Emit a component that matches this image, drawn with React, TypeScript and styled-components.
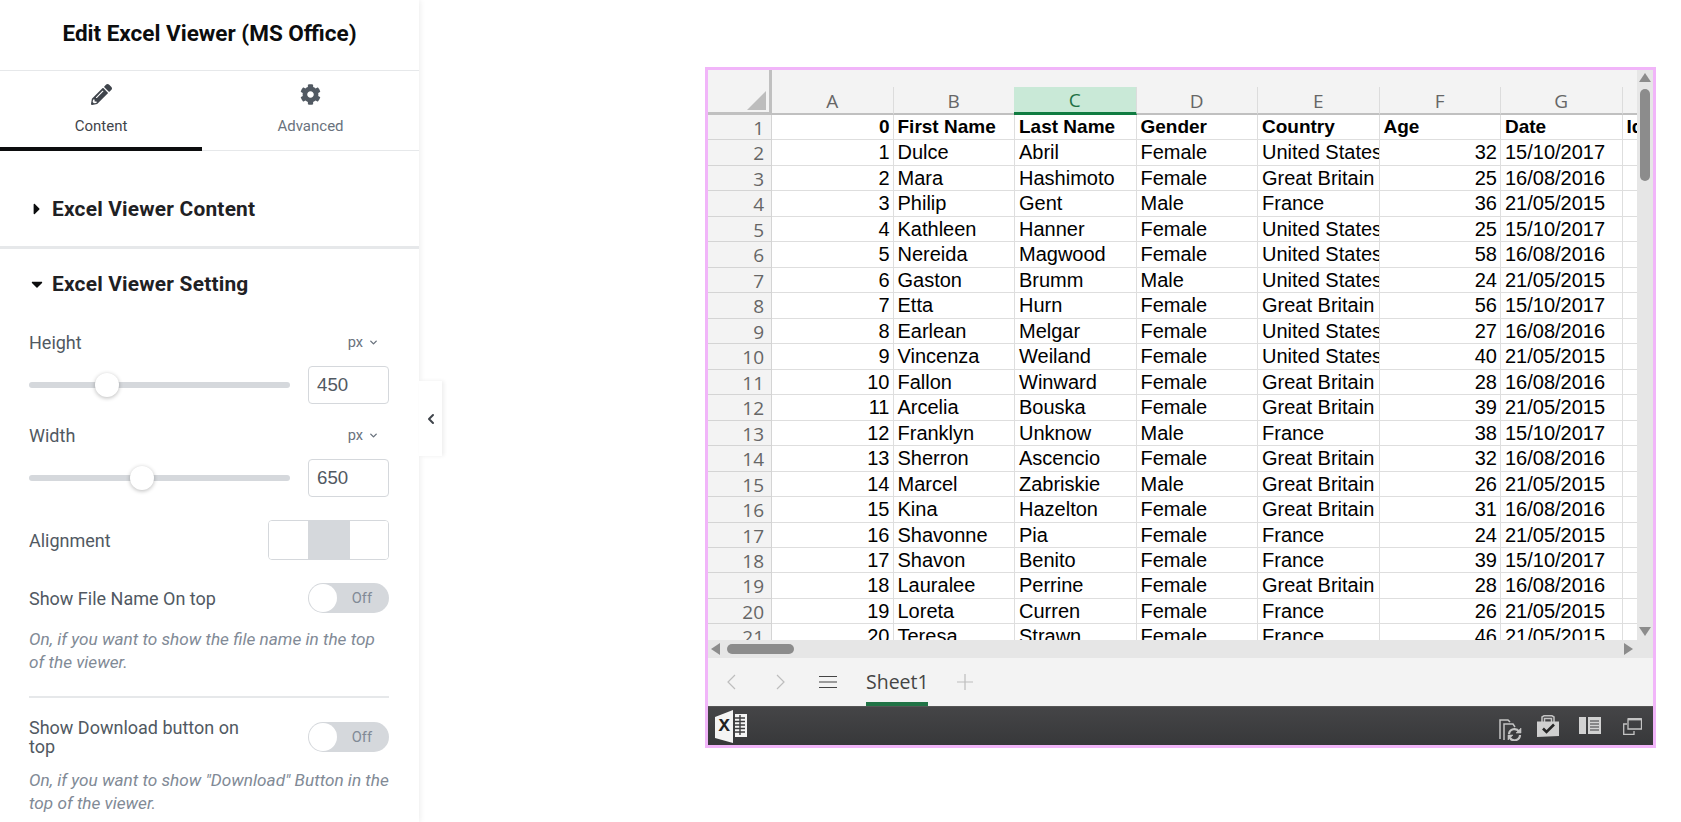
import styled, { createGlobalStyle } from "styled-components";
import { FaCog, FaPencilAlt, FaCaretRight, FaCaretDown } from "react-icons/fa";
import { LuChevronDown, LuChevronLeft } from "react-icons/lu";

const GlobalStyle = createGlobalStyle`
  html, body {
    margin: 0;
    padding: 0;
    background: #fff;
    overflow: hidden;
  }
  * {
    box-sizing: border-box;
  }
`;

const Page = styled.div`
  display: flex;
  width: 1681px;
  height: 822px;
  font-family: Roboto, "Liberation Sans", sans-serif;
`;

/* ---------- editor panel ---------- */
const Panel = styled.aside`
  position: relative;
  flex: none;
  width: 419px;
  height: 822px;
  background: #fff;
  box-shadow: 1px 0 6px rgba(0, 0, 0, 0.08);
`;
const PanelClip = styled.div`
  height: 822px;
  overflow: hidden;
`;
const PanelTitle = styled.h1`
  margin: 0;
  height: 71px;
  display: flex;
  align-items: center;
  justify-content: center;
  padding-bottom: 4px;
  font-size: 22.5px;
  font-weight: 700;
  color: #0c0d0e;
  border-bottom: 1px solid #e6e8ea;
`;
const Tabs = styled.div`
  display: flex;
  height: 80px;
  border-bottom: 1px solid #e6e8ea;
`;
const Tab = styled.div<{ $active?: boolean }>`
  flex: ${(p) => (p.$active ? "0 0 202px" : "1")};
  display: flex;
  flex-direction: column;
  align-items: center;
  padding-top: 13px;
  font-size: 15px;
  color: ${(p) => (p.$active ? "#3f444b" : "#69727d")};
  border-bottom: 4px solid ${(p) => (p.$active ? "#0c0d0e" : "transparent")};
  margin-bottom: -1px;
  svg {
    width: 21px;
    height: 21px;
    margin-bottom: 12px;
    color: ${(p) => (p.$active ? "#3f444b" : "#515962")};
  }
`;
const Section = styled.div<{ $open?: boolean }>`
  display: flex;
  align-items: center;
  gap: 6px;
  height: ${(p) => (p.$open ? "81px" : "95px")};
  padding: ${(p) => (p.$open ? "0 0 11px 28px" : "21px 0 0 28px")};
  font-size: 20.9px;
  font-weight: 700;
  letter-spacing: 0.2px;
  color: #1f2124;
  svg {
    width: 18px;
    height: 18px;
    color: #0c0d0e;
  }
`;
const SectionRule = styled.div`
  height: 3px;
  background: #e6e8ea;
`;
const Controls = styled.div`
  padding: 0 30px 0 29px;
`;
const LabelRow = styled.div`
  display: flex;
  align-items: center;
  justify-content: space-between;
  height: 24px;
  font-size: 18px;
  color: #515962;
`;
const Unit = styled.span`
  display: flex;
  align-items: center;
  gap: 5px;
  margin-right: 10px;
  font-size: 14.6px;
  color: #69727d;
  svg {
    width: 11px;
    height: 11px;
    stroke-width: 3;
  }
`;
const SliderRow = styled.div`
  display: flex;
  align-items: center;
  justify-content: space-between;
  height: 38px;
  margin: 12px 0 19px;
`;
const Track = styled.div`
  position: relative;
  width: 261px;
  height: 6px;
  border-radius: 3px;
  background: #d5d8dc;
`;
const Thumb = styled.div`
  position: absolute;
  top: -9px;
  width: 24px;
  height: 24px;
  border-radius: 50%;
  background: #fff;
  box-shadow: 0 1px 4px rgba(0, 0, 0, 0.28);
`;
const NumberBox = styled.div`
  display: flex;
  align-items: center;
  width: 81px;
  height: 38px;
  padding-left: 8px;
  font-family: "Liberation Sans", Arial, sans-serif;
  font-size: 18.67px;
  color: #515962;
  border: 1px solid #d5d8dc;
  border-radius: 4px;
`;
const InlineRow = styled.div<{ $h: number; $top?: number }>`
  display: flex;
  align-items: center;
  justify-content: space-between;
  height: ${(p) => p.$h}px;
  margin-top: ${(p) => p.$top ?? 0}px;
  font-size: 18px;
  color: #515962;
`;
const AlignBox = styled.div`
  display: flex;
  width: 121px;
  height: 40px;
  overflow: hidden;
  border: 1px solid #d5d8dc;
  border-radius: 4px;
`;
const AlignCell = styled.div<{ $on?: boolean }>`
  flex: ${(p) => (p.$on ? "0 0 42px" : "1")};
  background: ${(p) => (p.$on ? "#d5d8dc" : "#fff")};
`;
const Toggle = styled.div`
  flex: none;
  display: flex;
  align-items: center;
  justify-content: space-between;
  width: 81px;
  height: 30px;
  padding: 0 17px 0 1px;
  font-size: 14.6px;
  color: #818a96;
  background: #d5d8dc;
  border-radius: 15px;
`;
const Knob = styled.div`
  width: 28px;
  height: 28px;
  border-radius: 50%;
  background: #fff;
`;
const ToggleLabel = styled.div`
  width: 225px;
  line-height: 19px;
`;
const Hint = styled.p<{ $top: number }>`
  margin: ${(p) => p.$top}px 0 0;
  font-size: 17.2px;
  line-height: 23px;
  font-style: italic;
  color: #818a96;
`;
const Rule = styled.div`
  height: 2px;
  margin: 22px 0 24px;
  background: #e6e8ea;
`;
const Collapse = styled.div`
  position: absolute;
  top: 381px;
  left: 419px;
  width: 23px;
  height: 75px;
  display: flex;
  align-items: center;
  justify-content: center;
  background: #fff;
  box-shadow: 2px 0 4px rgba(0, 0, 0, 0.07);
  svg {
    width: 16px;
    height: 16px;
    color: #3f444b;
  }
`;

/* ---------- excel viewer ---------- */
const Main = styled.main`
  flex: 1;
  padding: 67px 0 0 286px;
`;
const Viewer = styled.div`
  display: flex;
  flex-direction: column;
  width: 951px;
  height: 681px;
  border: 3px solid #f1b5f9;
`;
const SheetArea = styled.div`
  display: flex;
  height: 570px;
  overflow: hidden;
`;
const Grid = styled.div`
  flex: 1;
  min-width: 0;
  overflow: hidden;
  font-family: "Liberation Sans", Arial, sans-serif;
  font-size: 20px;
  color: #000;
`;
const ColHeaders = styled.div`
  display: flex;
  height: 45px;
  background: #f3f3f3;
`;
const Corner = styled.div`
  position: relative;
  flex: none;
  width: 64px;
  border-right: 3px solid #c0c0c0;
  border-bottom: 3px solid #c0c0c0;
`;
const CornerMark = styled.div`
  position: absolute;
  right: 3px;
  bottom: 2px;
  width: 19px;
  height: 19px;
  background: #bdbdbd;
  clip-path: polygon(100% 0, 100% 100%, 0 100%);
`;
const ColHead = styled.div<{ $on?: boolean }>`
  flex: none;
  width: ${(p) => (p.$on ? "122.5px" : "121.5px")};
  height: 28px;
  margin: 17px 0 0 ${(p) => (p.$on ? "-1px" : "0")};
  padding-top: 1px;
  display: flex;
  align-items: center;
  justify-content: center;
  font-family: "Open Sans", "Noto Sans", sans-serif;
  font-size: 19px;
  color: ${(p) => (p.$on ? "#1e7145" : "#666")};
  background: ${(p) => (p.$on ? "#c9e9d7" : "transparent")};
  border-right: 1px solid #dcdcdc;
  border-bottom: ${(p) => (p.$on ? "3px solid #107c41" : "2px solid #c0c0c0")};
`;
const Row = styled.div`
  display: flex;
  height: 25.47px;
`;
const RowHead = styled.div`
  flex: none;
  width: 64px;
  padding-right: 7px;
  text-align: right;
  font-family: "Open Sans", "Noto Sans", sans-serif;
  font-size: 19px;
  line-height: 27px;
  color: #666;
  background: #f3f3f3;
  border-right: 1px solid #d4d4d4;
  border-bottom: 1px solid #d4d4d4;
  overflow: hidden;
`;
const Cell = styled.div<{ $num?: boolean; $bold?: boolean }>`
  flex: none;
  width: 121.5px;
  padding: 0 ${(p) => (p.$num ? "3px" : "0")} 0 ${(p) => (p.$num ? "0" : "4px")};
  overflow: hidden;
  white-space: nowrap;
  line-height: 24.5px;
  text-align: ${(p) => (p.$num ? "right" : "left")};
  font-size: ${(p) => (p.$bold ? "19px" : "20px")};
  font-weight: ${(p) => (p.$bold ? 700 : 400)};
  border-right: 1px solid #dedede;
  border-bottom: 1px solid #dedede;
`;
const VScroll = styled.div`
  flex: none;
  display: flex;
  flex-direction: column;
  align-items: center;
  width: 16px;
  background: #e6e6e6;
`;
const VThumb = styled.div`
  width: 10px;
  height: 92px;
  margin-top: 7px;
  border-radius: 5px;
  background: #8c8c8c;
`;
const Arrow = styled.svg<{ $end?: boolean }>`
  flex: none;
  display: block;
  fill: #8c8c8c;
  margin-left: ${(p) => (p.$end ? "auto" : "0")};
`;
const VArrowUp = styled(Arrow)`
  margin: 3px 0 0;
`;
const VArrowDown = styled(Arrow)`
  margin: auto 0 4px;
`;
const HScroll = styled.div`
  flex: none;
  display: flex;
  align-items: center;
  height: 18px;
  padding: 0 20px 0 3px;
  background: #e6e6e6;
`;
const HThumb = styled.div`
  width: 67px;
  height: 10px;
  margin-left: 7px;
  border-radius: 5px;
  background: #8c8c8c;
`;
const SheetTabs = styled.div`
  flex: none;
  display: flex;
  align-items: center;
  height: 48px;
  padding-left: 19px;
  background: #f3f3f3;
  color: #bdbdbd;
`;
const Nav = styled.svg`
  flex: none;
  display: block;
  fill: none;
  stroke: currentColor;
  stroke-width: 1.2;
`;
const Burger = styled(Nav)`
  margin: 0 29px 0 34px;
  color: #444;
`;
const NavNext = styled(Nav)`
  margin-left: 40px;
`;
const SheetTab = styled.div`
  display: flex;
  align-items: center;
  width: 62px;
  height: 48px;
  padding-top: 2px;
  font-family: "Open Sans", "Noto Sans", sans-serif;
  font-size: 19.5px;
  font-weight: 500;
  color: #444;
  border-bottom: 4px solid #217346;
  white-space: nowrap;
`;
const AddSheet = styled(Nav)`
  margin-left: 28px;
`;
const StatusBar = styled.div`
  flex: 1;
  display: flex;
  align-items: flex-start;
  padding: 3px 11px 0 7px;
  background: linear-gradient(#454547, #37383a);
  border-top: 1px solid #555;
`;
const StatusIcons = styled.div`
  display: flex;
  align-items: flex-start;
  margin: 5px 0 0 auto;
`;
const StatusIcon = styled.svg<{ $top?: number; $left?: number }>`
  display: block;
  flex: none;
  margin: ${(p) => p.$top ?? 0}px 0 0 ${(p) => p.$left ?? 0}px;
`;
const LogoLetter = styled.text`
  font-family: "Liberation Mono", monospace;
  font-size: 19px;
  font-weight: 700;
  fill: #222;
`;

const columns = ["A", "B", "C", "D", "E", "F", "G", ""];

const rows: string[][] = [
  ["0", "First Name", "Last Name", "Gender", "Country", "Age", "Date", "Id"],
  ["1", "Dulce", "Abril", "Female", "United States", "32", "15/10/2017"],
  ["2", "Mara", "Hashimoto", "Female", "Great Britain", "25", "16/08/2016"],
  ["3", "Philip", "Gent", "Male", "France", "36", "21/05/2015"],
  ["4", "Kathleen", "Hanner", "Female", "United States", "25", "15/10/2017"],
  ["5", "Nereida", "Magwood", "Female", "United States", "58", "16/08/2016"],
  ["6", "Gaston", "Brumm", "Male", "United States", "24", "21/05/2015"],
  ["7", "Etta", "Hurn", "Female", "Great Britain", "56", "15/10/2017"],
  ["8", "Earlean", "Melgar", "Female", "United States", "27", "16/08/2016"],
  ["9", "Vincenza", "Weiland", "Female", "United States", "40", "21/05/2015"],
  ["10", "Fallon", "Winward", "Female", "Great Britain", "28", "16/08/2016"],
  ["11", "Arcelia", "Bouska", "Female", "Great Britain", "39", "21/05/2015"],
  ["12", "Franklyn", "Unknow", "Male", "France", "38", "15/10/2017"],
  ["13", "Sherron", "Ascencio", "Female", "Great Britain", "32", "16/08/2016"],
  ["14", "Marcel", "Zabriskie", "Male", "Great Britain", "26", "21/05/2015"],
  ["15", "Kina", "Hazelton", "Female", "Great Britain", "31", "16/08/2016"],
  ["16", "Shavonne", "Pia", "Female", "France", "24", "21/05/2015"],
  ["17", "Shavon", "Benito", "Female", "France", "39", "15/10/2017"],
  ["18", "Lauralee", "Perrine", "Female", "Great Britain", "28", "16/08/2016"],
  ["19", "Loreta", "Curren", "Female", "France", "26", "21/05/2015"],
  ["20", "Teresa", "Strawn", "Female", "France", "46", "21/05/2015"],
];

function ExcelLogo() {
  return (
    <StatusIcon width="32" height="33" viewBox="0 0 32 33">
      <path d="M0 7 L18 0 V33 L0 28 Z" fill="#f4f4f4" />
      <LogoLetter x="3.5" y="21">X</LogoLetter>
      <path d="M20 4 H32 V27 H20 Z" fill="#f4f4f4" />
      <path
        d="M18 8 H30 M18 11.5 H30 M18 15 H30 M18 18.5 H30 M18 22 H30 M25 5 V25"
        stroke="#3c3c3e"
        strokeWidth="1.4"
      />
    </StatusIcon>
  );
}

function SyncIcon() {
  return (
    <StatusIcon $top={4} width="23" height="22" viewBox="0 0 23 22" fill="none" stroke="#c4c4c4">
      <path d="M1 20 V1 H9 L11 3" strokeWidth="1.5" />
      <path d="M5 21 V5 H14 L16 8" strokeWidth="1.5" />
      <path d="M10 15 A5.5 5.5 0 0 1 20 12.5 M21 16 A5.5 5.5 0 0 1 11 19" strokeWidth="2.2" />
      <path d="M22 9 V14 H17 Z M9 21 V16 H14 Z" fill="#c4c4c4" strokeWidth="0.6" />
    </StatusIcon>
  );
}

function CheckIcon() {
  return (
    <StatusIcon $left={15} width="22" height="22" viewBox="0 0 22 22">
      <path d="M5 7 V2 L7 0.8 H15 L17 2 V7 M7.5 7 V3.5 H14.5 V7" fill="none" stroke="#c4c4c4" strokeWidth="1.5" />
      <path d="M0 6.5 H22 V21 L0 22 Z" fill="#cfcfcf" />
      <path d="M6 13.5 L9.5 17 L17 9.5" fill="none" stroke="#262626" strokeWidth="2.6" />
    </StatusIcon>
  );
}

function ReaderIcon() {
  return (
    <StatusIcon $top={2} $left={20} width="22" height="17" viewBox="0 0 22 17">
      <path d="M0 0 H7 V17 H0 Z M9 0 H22 V17 H9 Z" fill="#d2d2d2" />
      <path d="M11 4 H20 M11 7 H20 M11 10 H20 M11 13 H20" stroke="#3c3c3e" strokeWidth="1" />
    </StatusIcon>
  );
}

function WindowIcon() {
  return (
    <StatusIcon $top={3} $left={22} width="19" height="17" viewBox="0 0 19 17" fill="none" stroke="#c4c4c4">
      <path d="M5 1 H18.5 V11 H5 Z" strokeWidth="1.3" />
      <path d="M5 1.2 H18.5" strokeWidth="2.4" />
      <path d="M4 6 H0.7 V16.3 H11 V13" strokeWidth="1.3" />
    </StatusIcon>
  );
}

export default function App() {
  return (
    <Page>
      <GlobalStyle />
      <Panel>
        <PanelClip>
          <PanelTitle>Edit Excel Viewer (MS Office)</PanelTitle>
          <Tabs>
            <Tab $active>
              <FaPencilAlt />
              Content
            </Tab>
            <Tab>
              <FaCog />
              Advanced
            </Tab>
          </Tabs>
          <Section>
            <FaCaretRight />
            Excel Viewer Content
          </Section>
          <SectionRule />
          <Section $open>
            <FaCaretDown />
            Excel Viewer Setting
          </Section>
          <Controls>
            <LabelRow>
              Height
              <Unit>
                px <LuChevronDown />
              </Unit>
            </LabelRow>
            <SliderRow>
              <Track>
                <Thumb style={{ left: 66 }} />
              </Track>
              <NumberBox>450</NumberBox>
            </SliderRow>
            <LabelRow>
              Width
              <Unit>
                px <LuChevronDown />
              </Unit>
            </LabelRow>
            <SliderRow>
              <Track>
                <Thumb style={{ left: 101 }} />
              </Track>
              <NumberBox>650</NumberBox>
            </SliderRow>
            <InlineRow $h={48}>
              Alignment
              <AlignBox>
                <AlignCell />
                <AlignCell $on />
                <AlignCell />
              </AlignBox>
            </InlineRow>
            <InlineRow $h={30} $top={19}>
              Show File Name On top
              <Toggle>
                <Knob />
                Off
              </Toggle>
            </InlineRow>
            <Hint $top={15}>
              On, if you want to show the file name in the top of the viewer.
            </Hint>
            <Rule />
            <InlineRow $h={30}>
              <ToggleLabel>Show Download button on top</ToggleLabel>
              <Toggle>
                <Knob />
                Off
              </Toggle>
            </InlineRow>
            <Hint $top={17}>
              On, if you want to show "Download" Button in the top of the viewer.
            </Hint>
          </Controls>
        </PanelClip>
        <Collapse>
          <LuChevronLeft strokeWidth={3} />
        </Collapse>
      </Panel>

      <Main>
        <Viewer>
          <SheetArea>
            <Grid>
              <ColHeaders>
                <Corner>
                  <CornerMark />
                </Corner>
                {columns.map((c, i) => (
                  <ColHead key={i} $on={c === "C"}>
                    {c}
                  </ColHead>
                ))}
              </ColHeaders>
              {rows.map((r, i) => (
                <Row key={i}>
                  <RowHead>{i + 1}</RowHead>
                  {columns.map((_, j) => (
                    <Cell key={j} $num={j === 0 || (j === 5 && i > 0)} $bold={i === 0}>
                      {r[j] ?? ""}
                    </Cell>
                  ))}
                </Row>
              ))}
            </Grid>
            <VScroll>
              <VArrowUp width="12" height="9" viewBox="0 0 12 9">
                <path d="M6 0 L12 9 H0 Z" />
              </VArrowUp>
              <VThumb />
              <VArrowDown width="12" height="9" viewBox="0 0 12 9">
                <path d="M0 0 H12 L6 9 Z" />
              </VArrowDown>
            </VScroll>
          </SheetArea>
          <HScroll>
            <Arrow width="9" height="12" viewBox="0 0 9 12">
              <path d="M9 0 V12 L0 6 Z" />
            </Arrow>
            <HThumb />
            <Arrow $end width="9" height="12" viewBox="0 0 9 12">
              <path d="M0 0 L9 6 L0 12 Z" />
            </Arrow>
          </HScroll>
          <SheetTabs>
            <Nav width="9" height="16" viewBox="0 0 9 16">
              <path d="M8 1 L1 8 L8 15" />
            </Nav>
            <NavNext width="9" height="16" viewBox="0 0 9 16">
              <path d="M1 1 L8 8 L1 15" />
            </NavNext>
            <Burger width="18" height="14" viewBox="0 0 18 14">
              <path d="M0 1.5 H18 M0 7 H18 M0 12.5 H18" />
            </Burger>
            <SheetTab>Sheet1</SheetTab>
            <AddSheet width="18" height="18" viewBox="0 0 18 18">
              <path d="M9 1 V17 M1 9 H17" />
            </AddSheet>
          </SheetTabs>
          <StatusBar>
            <ExcelLogo />
            <StatusIcons>
              <SyncIcon />
              <CheckIcon />
              <ReaderIcon />
              <WindowIcon />
            </StatusIcons>
          </StatusBar>
        </Viewer>
      </Main>
    </Page>
  );
}
